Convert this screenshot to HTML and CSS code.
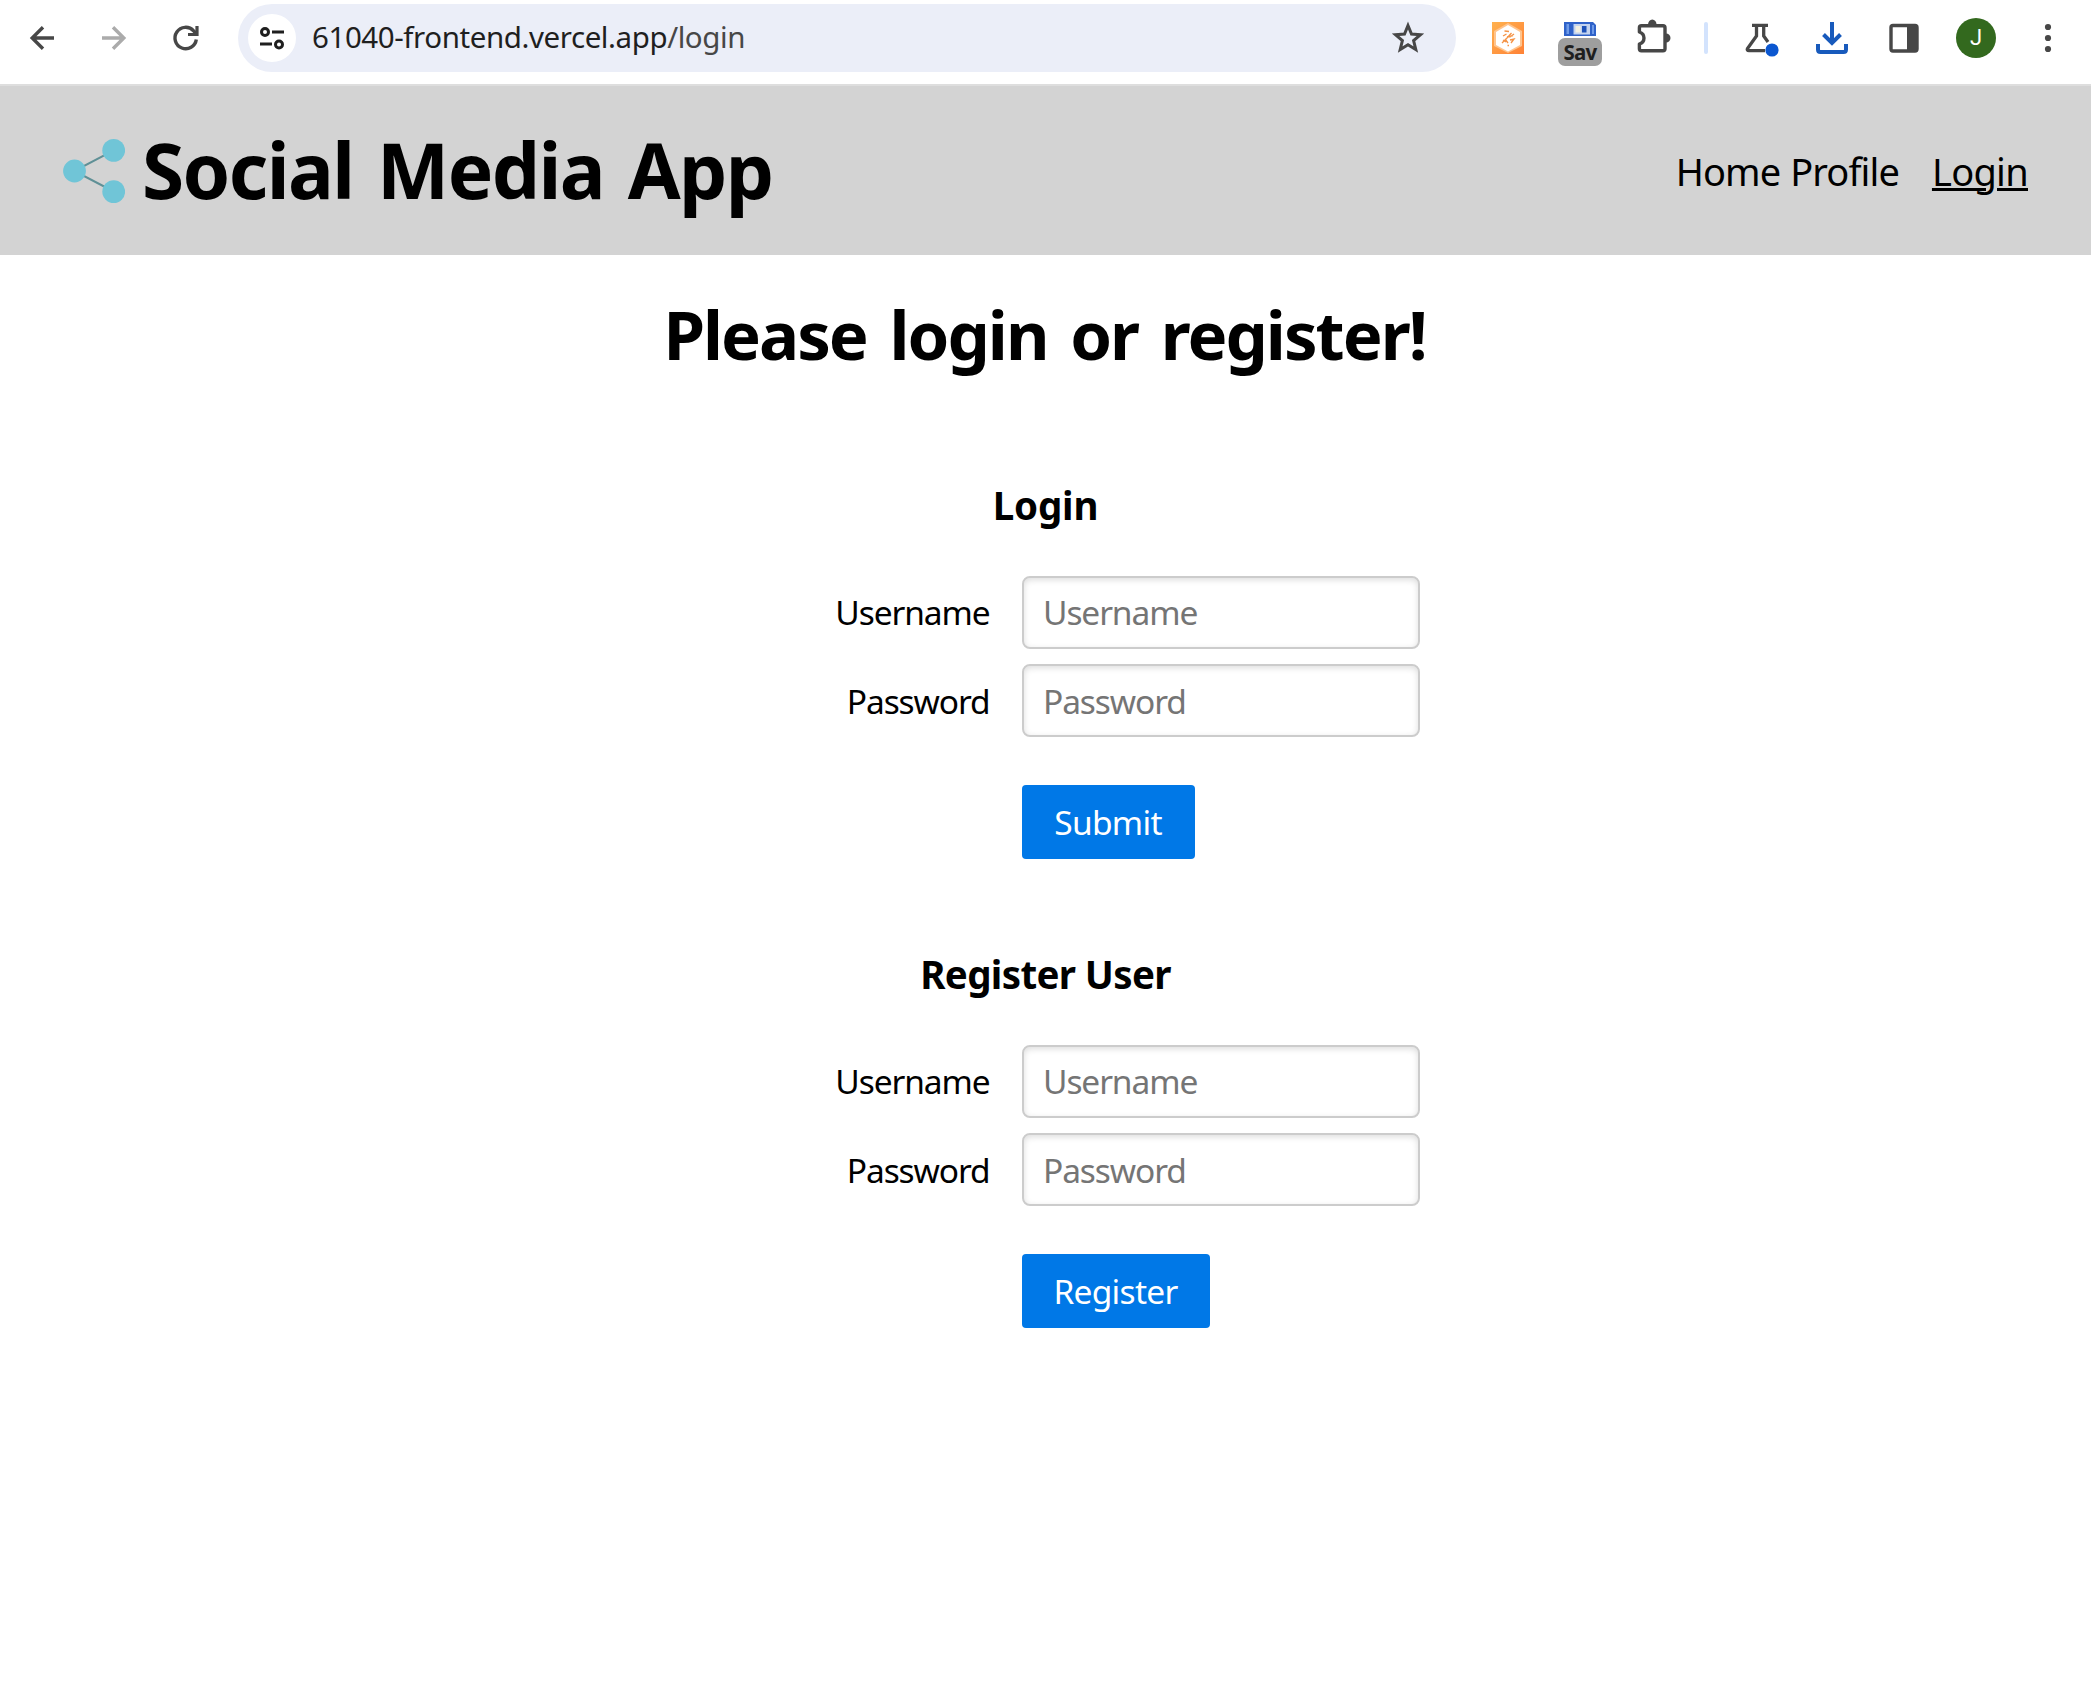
FILE: index.html
```html
<!DOCTYPE html>
<html lang="en">
<head>
<meta charset="utf-8">
<title>Social Media App</title>
<link rel="stylesheet" href="styles.css">
</head>
<body>
<div class="toolbar">
  <svg class="tool" viewBox="0 0 72 76"><path d="M48 38H26M37 27.200L26.200 38L37 48.800" fill="none" stroke="#474747" stroke-width="3.400"/></svg>
  <svg class="tool" viewBox="0 0 72 76"><path d="M24 38H46M35 27.200L45.800 38L35 48.800" fill="none" stroke="#ababab" stroke-width="3.400"/></svg>
  <svg class="tool" viewBox="0 0 72 76"><path d="M46.300 39.500A10.700 10.700 0 1 1 43.600 30.800L46.500 34" fill="none" stroke="#474747" stroke-width="3.400"/><path d="M47 26V34.500H38" fill="none" stroke="#474747" stroke-width="3.200"/></svg>
  <div class="omnibox">
    <svg class="site" viewBox="0 0 48 48"><circle cx="24" cy="24" r="24" fill="#fff"/><g fill="none" stroke="#1f1f1f" stroke-width="3"><circle cx="17" cy="18" r="3.500"/><path d="M24 18H36M12 30H24"/><circle cx="31" cy="30.500" r="3.500"/></g></svg>
    <span class="url">61040-frontend.vercel.app<span class="path">/login</span></span>
    <svg class="star" viewBox="0 0 36 36"><path d="M18 5.500L21.500 14L30.500 14.700L23.600 20.600L25.800 29.500L18 24.700L10.200 29.500L12.400 20.600L5.500 14.700L14.500 14Z" fill="none" stroke="#474747" stroke-width="3"/></svg>
  </div>
  <svg class="tool" viewBox="0 0 72 76"><defs><linearGradient id="tile" x1="0" y1="0" x2="1" y2="1"><stop offset="0" stop-color="#ffb14e"/><stop offset="1" stop-color="#ff8236"/></linearGradient></defs><path d="M20 22H52V54H20Z" fill="url(#tile)"/><path d="M36 23L50 31V46L36 53L22 46V31Z" fill="#ffc48d"/><path d="M36 25L48 32V45L36 51.500L24 45V32Z" fill="#fff"/><path d="M32.500 31L37 31.500M31 36L34.500 34M39.500 33L35 38L30 43M35 37L41 35.500M38 37L42 34M33 39L36 43M38 40L42 39L39 43M31 40L34 42M35.500 45.500h1.500" fill="none" stroke="#f49346" stroke-width="1.300"/></svg>
  <div class="save">
    <svg class="floppy" viewBox="0 0 32 14"><path d="M0 0H29L32 3V14H0Z" fill="#2f62c9"/><path d="M2.500 2H5V12H2.500ZM28 3H30V12H28Z" fill="#6f9be8"/><path d="M9.500 2H26V12.500H9.500Z" fill="#c3d3ee"/><path d="M11.500 4H16.500V10.500H11.500Z" fill="#f3f0e0"/><path d="M18 4H22.500V10.500H18Z" fill="#1d51b8"/></svg>
    <span class="badge">Sav</span>
  </div>
  <svg class="tool" viewBox="0 0 72 76"><path d="M25.400 25.700H47Q49 25.700 49 27.700V48.700Q49 50.700 47 50.700H25.400Q23.400 50.700 23.400 48.700V44C29.500 42 29.500 34 23.400 32V27.700Q23.400 25.700 25.400 25.700Z" fill="none" stroke="#474747" stroke-width="3.400" stroke-linejoin="round"/><path d="M32 25A4.300 5.600 0 0 1 40.600 25ZM50 33.500A4.500 4.500 0 0 1 50 42.500Z" fill="#474747"/></svg>
  <div class="divider"></div>
  <svg class="tool" viewBox="0 0 72 76"><path d="M28 25.300H44M32.500 26V36L23.500 48.500Q22.500 50.700 25 50.700H41M39.700 26V36L44 42" fill="none" stroke="#474747" stroke-width="3.300"/><circle cx="48" cy="50" r="6.600" fill="#0b57d0"/></svg>
  <svg class="tool" viewBox="0 0 72 76"><path d="M36 22V43M27.500 34.500L36 43L44.500 34.500M22 44V49.500Q22 52 24.500 52H47.500Q50 52 50 49.500V44" fill="none" stroke="#185abc" stroke-width="4"/></svg>
  <svg class="tool" viewBox="0 0 72 76"><rect x="23" y="25.500" width="26" height="25.500" rx="2" fill="none" stroke="#474747" stroke-width="3.400"/><path d="M39 25H49V51H39Z" fill="#474747"/></svg>
  <div class="account"><span class="avatar">J</span></div>
  <svg class="tool" viewBox="0 0 72 76"><g fill="#474747"><circle cx="36" cy="27" r="3.100"/><circle cx="36" cy="38" r="3.100"/><circle cx="36" cy="49" r="3.100"/></g></svg>
</div>
<header class="header">
  <div class="brand">
    <svg class="logo" viewBox="0 0 62 64"><path d="M50.700 11.300L11.300 32L50.700 52.500" fill="none" stroke="#5f9096" stroke-width="2"/><g fill="#70c5d7"><circle cx="11.500" cy="32" r="11.400"/><circle cx="50.700" cy="11.400" r="11.400"/><circle cx="50.700" cy="52.600" r="11.400"/></g></svg>
    <span class="title">Social Media App</span>
  </div>
  <nav class="nav"><a>Home</a><a>Profile</a><a class="current">Login</a></nav>
</header>
<main class="main">
  <h1>Please login or register!</h1>
  <form class="form">
    <h3>Login</h3>
    <div class="field"><label>Username</label><input type="text" placeholder="Username"></div>
    <div class="field"><label>Password</label><input type="password" placeholder="Password"></div>
    <div class="controls"><button type="button" class="submit">Submit</button></div>
  </form>
  <form class="form">
    <h3 class="wide">Register User</h3>
    <div class="field"><label>Username</label><input type="text" placeholder="Username"></div>
    <div class="field"><label>Password</label><input type="password" placeholder="Password"></div>
    <div class="controls"><button type="button" class="register">Register</button></div>
  </form>
</main>
</body>
</html>
```
FILE: styles.css
```css
* { box-sizing: border-box; }
body {
  margin: 0;
  background: #fff;
  color: #000;
  font-family: "Noto Sans", "Open Sans", sans-serif;
  font-size: 33.5px;
  letter-spacing: -1.1px;
}
.toolbar {
  display: flex;
  height: 84px;
  padding: 0 7px 0 6px;
}
.tool { flex: none; width: 72px; height: 76px; }
.omnibox {
  flex: 1;
  display: flex;
  align-items: center;
  height: 68px;
  margin: 4px 16px 0;
  padding: 0 30px 0 10px;
  border-radius: 34px;
  background: #ebeef8;
}
.site { flex: none; width: 48px; height: 48px; }
.url {
  flex: 1;
  margin-left: 16px;
  color: #1f1f1f;
  font-size: 29.5px;
  line-height: 66px;
  height: 68px;
  letter-spacing: -0.42px;
}
.path { color: #474747; }
.star { flex: none; width: 36px; height: 36px; }
.save {
  display: flex;
  flex: none;
  flex-direction: column;
  align-items: center;
  gap: 2px;
  width: 72px;
  padding-top: 22px;
}
.floppy { width: 32px; height: 14px; }
.badge {
  width: 44px;
  height: 28px;
  border-radius: 7px;
  background: #9e9e9e;
  color: #1f1f1f;
  font-size: 20.5px;
  font-weight: 700;
  letter-spacing: -0.7px;
  line-height: 29px;
  text-align: center;
}
.divider {
  flex: none;
  width: 4px;
  height: 32px;
  margin: 22px 16px 0;
  border-radius: 2px;
  background: #d3e3fd;
}
.account { flex: none; width: 72px; padding: 18px 16px 0; }
.avatar {
  display: block;
  width: 40px;
  height: 40px;
  border-radius: 50%;
  background: #33691e;
  color: #fff;
  font-family: Roboto, sans-serif;
  font-size: 22px;
  letter-spacing: 0;
  line-height: 40px;
  text-align: center;
}
.header {
  display: flex;
  align-items: center;
  justify-content: space-between;
  height: 171px;
  padding: 0 63px;
  border-top: 2px solid #dedede;
  background: #d3d3d3;
}
.brand { display: flex; align-items: center; gap: 17px; }
.logo { width: 62px; height: 64px; }
.title {
  margin-bottom: 4px;
  font-size: 76.5px;
  font-weight: 700;
  letter-spacing: -1.6px;
  word-spacing: 5.5px;
  line-height: 100px;
}
.nav {
  display: flex;
  gap: 10px;
  font-size: 38px;
  letter-spacing: -0.9px;
  line-height: 52px;
}
.current {
  margin-left: 23px;
  letter-spacing: -0.7px;
  text-decoration: underline;
  text-decoration-thickness: 3px;
}
.main { padding-top: 29px; }
h1 {
  margin: 0 0 60px;
  padding-right: 2px;
  font-size: 67px;
  letter-spacing: -1.98px;
  word-spacing: 7.3px;
  line-height: 100px;
  text-align: center;
}
.form { width: 750px; height: 469px; margin: 0 auto; }
h3 {
  margin: 0 0 39px;
  padding-top: 29px;
  font-size: 38.5px;
  letter-spacing: -0.2px;
  line-height: 64px;
  text-align: center;
}
.wide { letter-spacing: -0.64px; }
.field { display: flex; align-items: center; height: 72.5px; margin-bottom: 16px; }
label { width: 319px; margin-right: 32px; text-align: right; }
input {
  width: 398px;
  height: 73px;
  padding: 0 19.5px;
  border: 2px solid #ccc;
  border-radius: 8px;
  box-shadow: inset 0 2px 6px #ddd;
  background: #fff;
  font: inherit;
  letter-spacing: inherit;
}
input::placeholder { color: #757575; }
.controls { padding: 32px 0 0 351px; }
button {
  height: 74px;
  padding: 0;
  border: 0;
  border-radius: 4px;
  background: #0078e7;
  color: #fff;
  font: inherit;
  letter-spacing: -0.7px;
}
.submit { width: 173px; }
.register { width: 188px; }
```
